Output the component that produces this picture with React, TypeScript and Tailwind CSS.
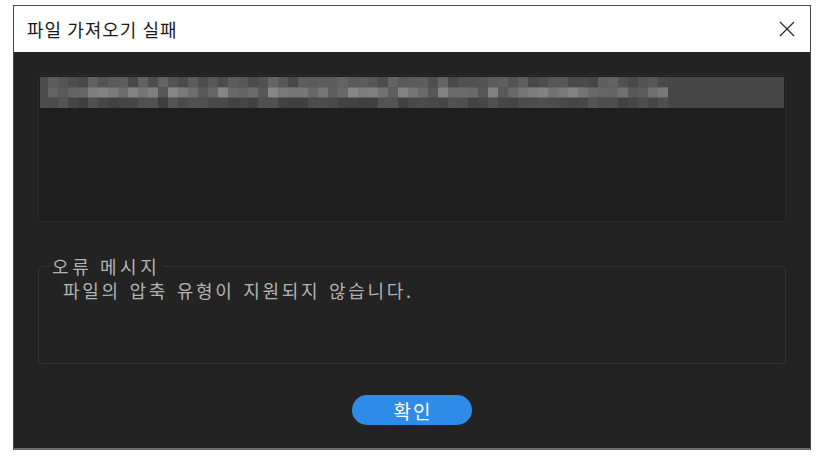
import React from 'react';

const font = { fontFamily: '"Noto Sans CJK KR", "Noto Sans", sans-serif' };

// deterministic mosaic cells for the blurred file path row
function mosaic(cols: number) {
  let seed = 17;
  const rnd = () => {
    seed = (seed * 1103515245 + 12345) % 2147483648;
    return seed / 2147483648;
  };
  const ranges: [number, number][] = [
    [70, 100],
    [85, 135],
    [62, 84],
  ];
  const cells: { x: number; y: number; v: number }[] = [];
  ranges.forEach(([lo, hi], r) => {
    for (let c = 0; c < cols; c++) {
      cells.push({ x: c, y: r, v: Math.round(lo + rnd() * (hi - lo)) });
    }
  });
  return cells;
}

function BlurredPath() {
  const cols = 62;
  const cells = mosaic(cols);
  return (
    <svg width={cols * 10} height={31} className="block">
      {cells.map((c) => (
        <rect
          key={`${c.x}-${c.y}`}
          x={c.x * 10}
          y={c.y * 10.33}
          width={10}
          height={10.4}
          fill={`rgb(${c.v},${c.v},${c.v})`}
        />
      ))}
    </svg>
  );
}

export default function App() {
  return (
    <div className="w-[819px] h-[458px] bg-white overflow-hidden" style={font}>
      <div className="ml-[13px] mt-[5px] w-[798px] border border-[#4a4a4a] border-b-0">
        {/* title bar */}
        <div className="h-[46px] bg-white flex items-center justify-between pl-[13px] pr-[13px]">
          <span className="text-[18px] text-[#1a1a1a] tracking-[1px]">파일 가져오기 실패</span>
          <svg width="18" height="18" viewBox="0 0 18 18" className="mr-[1px]">
            <path d="M2 2 L16 16 M16 2 L2 16" stroke="#2a2a2a" strokeWidth="1.3" fill="none" />
          </svg>
        </div>

        {/* body */}
        <div className="bg-[#232323] px-[24px] pt-[23px] pb-[23px] border-b-2 border-[#6e6e6e]">
          <div className="h-[147px] bg-[#1e1e1e] border border-[#2c2c2c] rounded-[2px] pt-[1px] px-[1px]">
            <div className="h-[31px] bg-[#464646] flex items-center">
              <div className="w-[8px] h-full bg-[#4c4c4c]" />
              <BlurredPath />
            </div>
          </div>

          <fieldset className="mt-[34px] h-[108px] border border-[#333333] rounded-[3px] px-[10px]">
            <legend className="px-[3px] text-[18px] leading-[20px] text-[#b2b2b2] tracking-[3.6px]">
              오류 메시지
            </legend>
            <p className="mt-[3px] pl-[14px] text-[18px] leading-[22px] text-[#b2b2b2] tracking-[2.7px] [word-spacing:2px]">
              파일의 압축 유형이 지원되지 않습니다.
            </p>
          </fieldset>

          <div className="flex justify-center mt-[31px]">
            <button className="w-[120px] h-[30px] rounded-full bg-[#2f8be8] text-white text-[19px] leading-none tracking-[2px] pl-[2px]">
              확인
            </button>
          </div>
        </div>
      </div>
    </div>
  );
}
